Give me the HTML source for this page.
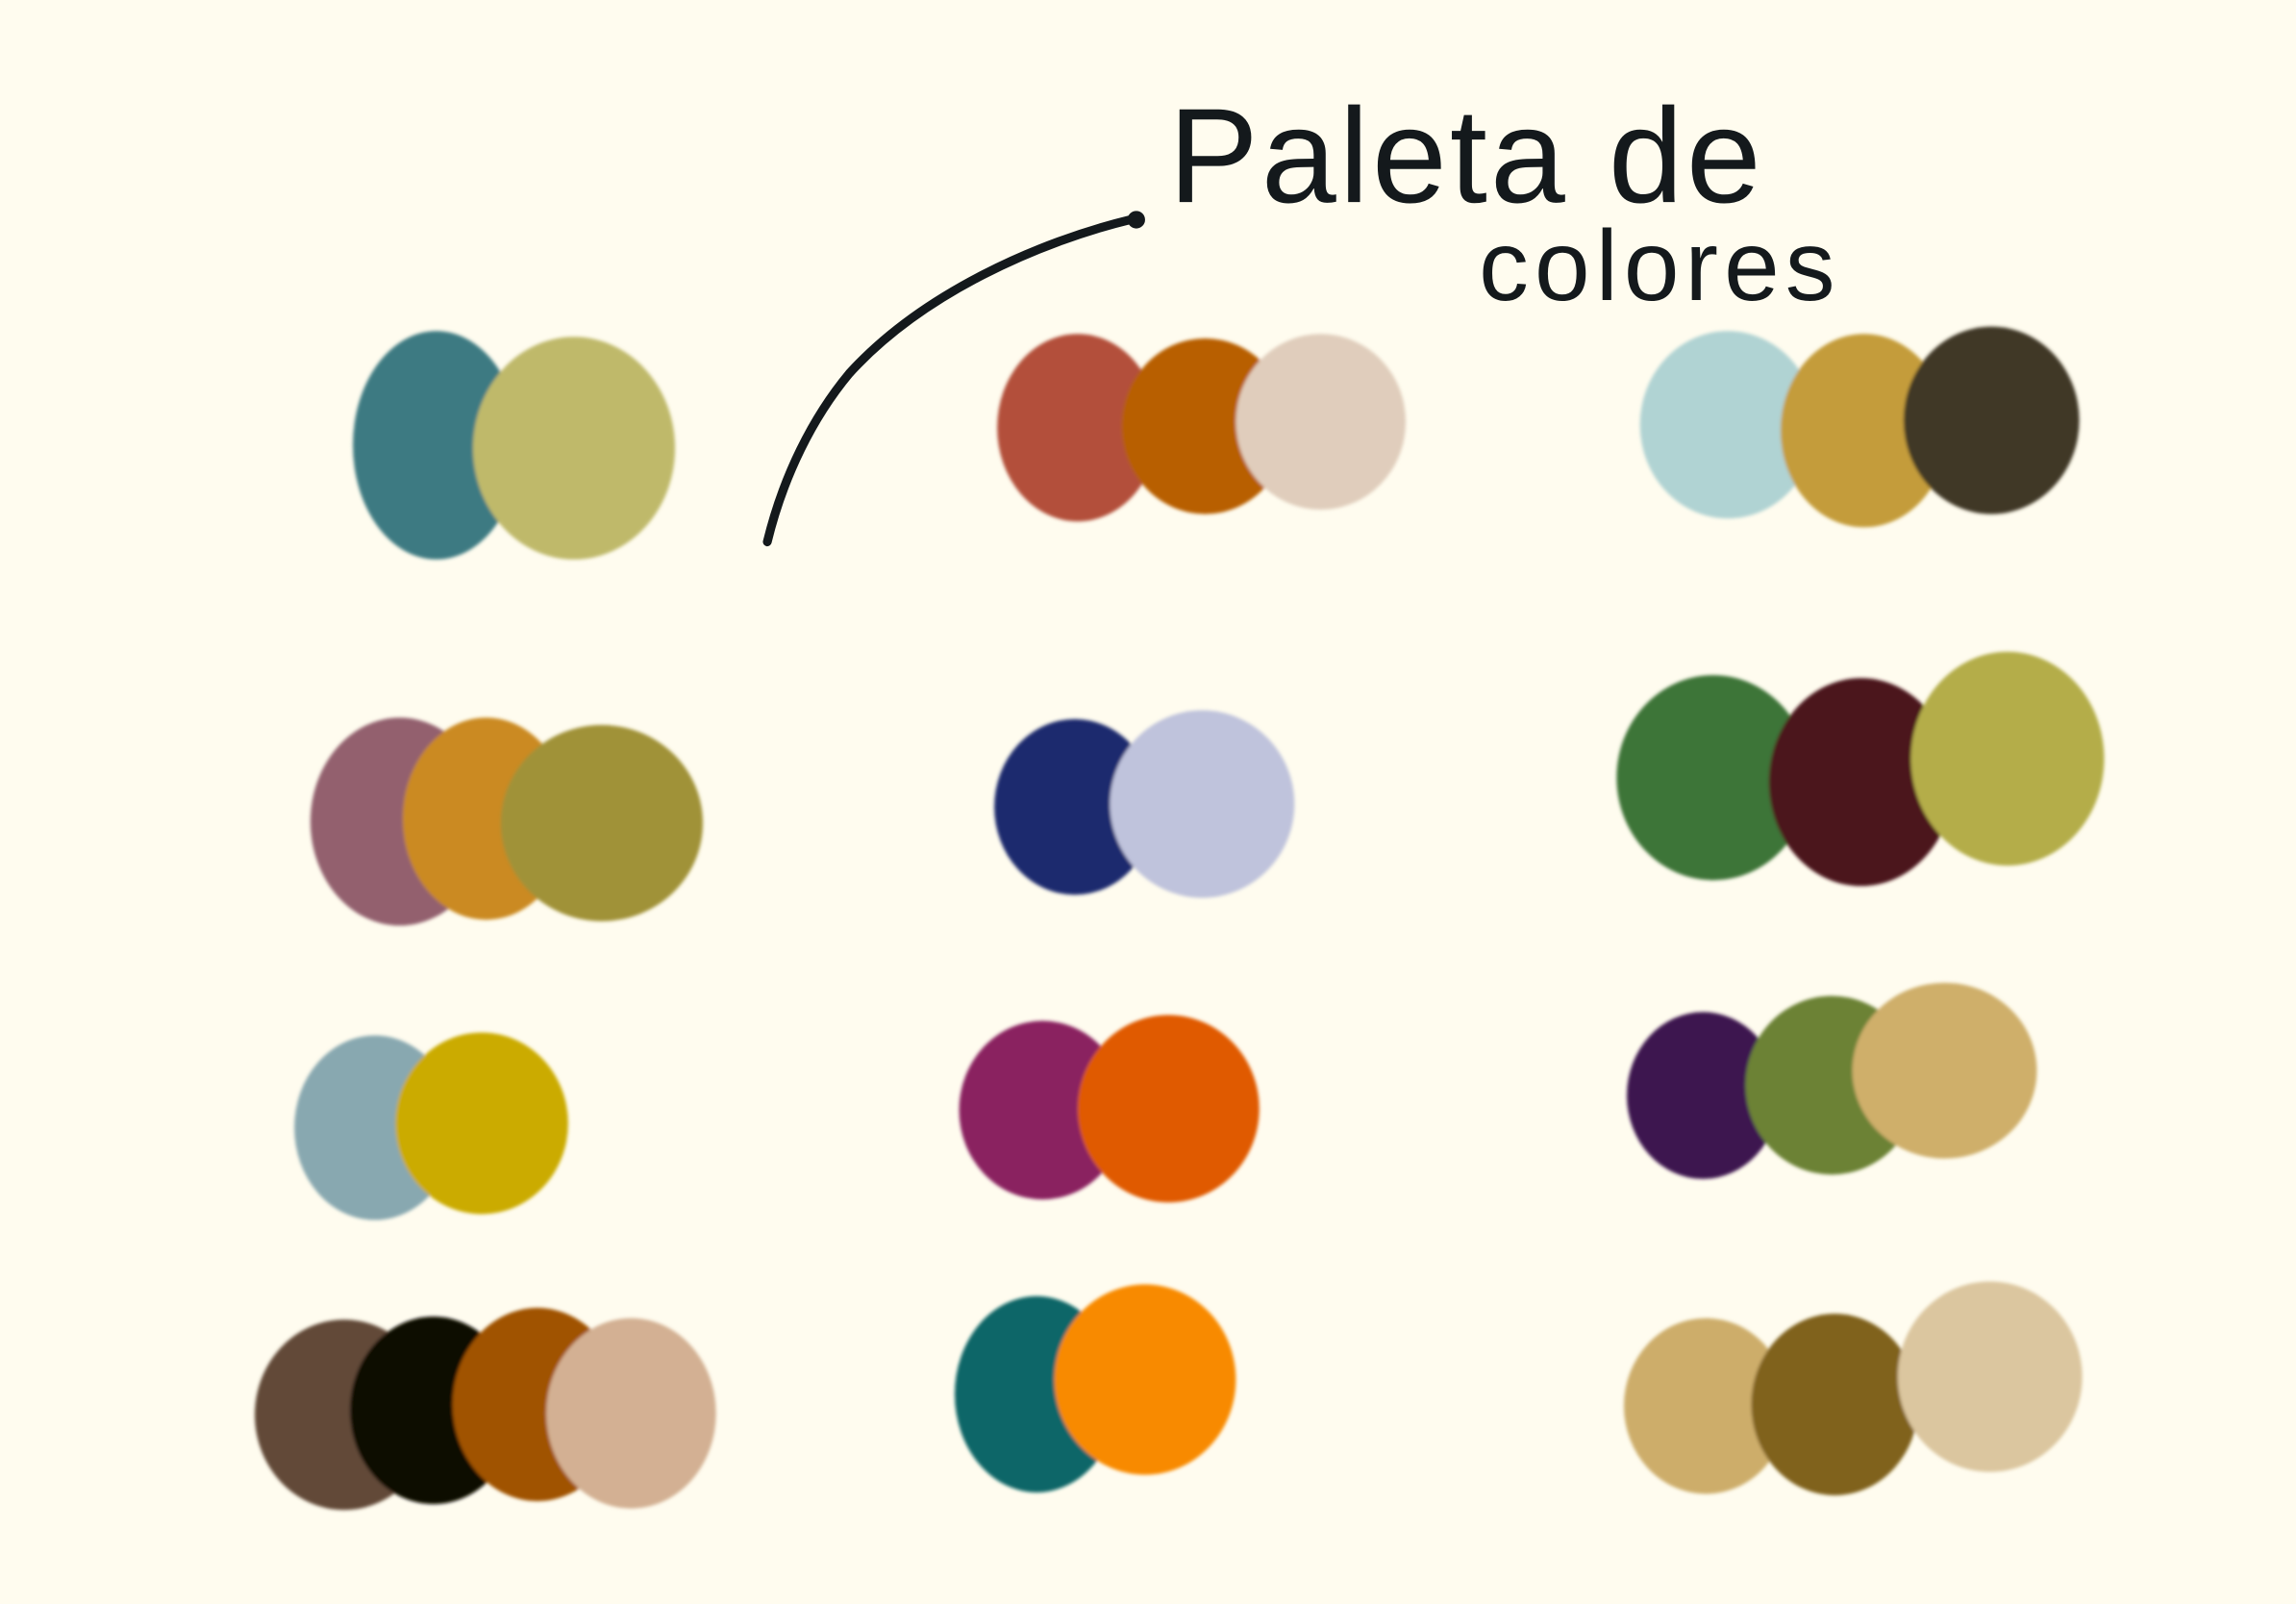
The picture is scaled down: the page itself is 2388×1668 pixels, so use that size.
<!DOCTYPE html>
<html><head><meta charset="utf-8"><style>
html,body{margin:0;padding:0;background:#fffcef;}
svg{display:block;}
</style></head><body>
<svg width="2388" height="1668" viewBox="0 0 1568 1095.2" preserveAspectRatio="none" xmlns="http://www.w3.org/2000/svg">
<defs><filter id="b"><feGaussianBlur stdDeviation="1.2"/></filter></defs>
<rect width="1568" height="1096" fill="#fffcef"/>
<g filter="url(#b)">
<ellipse cx="298" cy="304" rx="57" ry="78" fill="#3d7a82"/>
<ellipse cx="392" cy="306" rx="69" ry="76" fill="#bfb96b"/>
<ellipse cx="736" cy="292" rx="55" ry="64" fill="#b34f3b"/>
<ellipse cx="823" cy="291" rx="57" ry="60" fill="#b85e00"/>
<ellipse cx="902" cy="288" rx="58" ry="60" fill="#e0cdbc"/>
<ellipse cx="1180" cy="290" rx="60" ry="64" fill="#b0d3d3"/>
<ellipse cx="1273" cy="294" rx="57" ry="66" fill="#c49c3a"/>
<ellipse cx="1360" cy="287" rx="60" ry="64" fill="#403828"/>
<ellipse cx="273" cy="561" rx="61" ry="71" fill="#93606e"/>
<ellipse cx="332" cy="559" rx="57" ry="69" fill="#cb8a20"/>
<ellipse cx="411" cy="562" rx="69" ry="67" fill="#a09238"/>
<ellipse cx="734" cy="551" rx="55" ry="60" fill="#1f2a6e"/>
<ellipse cx="821" cy="549" rx="63" ry="64" fill="#bfc3dc"/>
<ellipse cx="1170" cy="531" rx="66" ry="70" fill="#3d7439"/>
<ellipse cx="1271" cy="534" rx="63" ry="71" fill="#4b141e"/>
<ellipse cx="1371" cy="518" rx="66" ry="73" fill="#b4ad48"/>
<ellipse cx="256" cy="770" rx="55" ry="63" fill="#88a8b0"/>
<ellipse cx="329" cy="767" rx="59" ry="62" fill="#cbab00"/>
<ellipse cx="712" cy="758" rx="57" ry="61" fill="#8a2260"/>
<ellipse cx="798" cy="757" rx="62" ry="64" fill="#e05a05"/>
<ellipse cx="1163" cy="748" rx="52" ry="57" fill="#3d1850"/>
<ellipse cx="1251" cy="741" rx="59" ry="61" fill="#6c8236"/>
<ellipse cx="1328" cy="731" rx="63" ry="60" fill="#cfaf6a"/>
<ellipse cx="235" cy="966" rx="61" ry="65" fill="#624838"/>
<ellipse cx="296" cy="963" rx="57" ry="64" fill="#110904"/>
<ellipse cx="367" cy="959" rx="58" ry="66" fill="#a05200"/>
<ellipse cx="431" cy="965" rx="58" ry="65" fill="#d3b093"/>
<ellipse cx="708" cy="952" rx="56" ry="67" fill="#0e6668"/>
<ellipse cx="782" cy="942" rx="62" ry="65" fill="#f88a06"/>
<ellipse cx="1165" cy="960" rx="56" ry="60" fill="#cdad6a"/>
<ellipse cx="1253" cy="959" rx="57" ry="62" fill="#80621d"/>
<ellipse cx="1359" cy="940" rx="63" ry="65" fill="#dbc69f"/>
</g>
<path d="M524 370 C535 325 555 285 580 255 C630 200 710 165 772 150" fill="none" stroke="#14191c" stroke-width="6" stroke-linecap="round"/>
<circle cx="776" cy="150" r="6" fill="#14191c"/>
<text x="798" y="138" font-family="Liberation Sans, sans-serif" font-size="92" fill="#14191c" letter-spacing="2">Paleta de</text>
<text x="1010" y="205" font-family="Liberation Sans, sans-serif" font-size="68" fill="#14191c" letter-spacing="4">colores</text>
</svg>
</body></html>
